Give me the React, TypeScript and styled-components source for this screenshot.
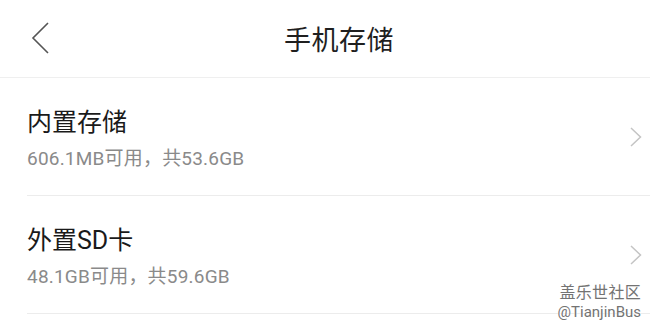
import styled, { createGlobalStyle } from 'styled-components';

const GlobalStyle = createGlobalStyle`
  html, body {
    margin: 0;
    padding: 0;
    background: #fff;
  }

  body {
    font-family: Roboto, "Noto Sans CJK SC", sans-serif;
    -webkit-font-smoothing: antialiased;
  }
`;

const StyledPage = styled.main`
  position: relative;
  width: 650px;
  height: 328px;
  overflow: hidden;
  background: #fff;
`;

const StyledHeader = styled.header`
  height: 77px;
  display: flex;
  align-items: center;
  padding-left: 31px;
  border-bottom: 1px solid #efefef;

  h1 {
    margin: 0 0 0 235px;
    font-size: 27px;
    font-weight: 400;
    color: #1f1f1f;
    letter-spacing: 0.5px;
  }
`;

const StyledBack = styled.svg`
  width: 18px;
  height: 32px;
  margin-top: -1px;
`;

const StyledRow = styled.div`
  padding-left: 27px;
`;

const StyledRowInner = styled.div`
  height: 117px;
  display: flex;
  align-items: center;
  justify-content: space-between;
  padding-right: 8px;
  border-bottom: 1px solid #ececec;
`;

const StyledText = styled.div`
  display: flex;
  flex-direction: column;
  gap: 9px;
  margin-top: 6px;

  h2 {
    margin: 0;
    font-size: 25px;
    line-height: 30px;
    font-weight: 400;
    color: #1a1a1a;
  }

  p {
    margin: 0;
    font-size: 19px;
    line-height: 24px;
    letter-spacing: 0.2px;
    color: #8a8a8a;
  }
`;

const StyledChevron = styled.svg`
  width: 12px;
  height: 20px;
`;

const StyledWatermark = styled.div`
  position: absolute;
  right: 9px;
  bottom: 6px;
  display: flex;
  flex-direction: column;
  align-items: flex-end;
  color: #737373;
  text-shadow: 0 0 2px #fff, 0 0 2px #fff;

  span:first-child {
    font-size: 16px;
    line-height: 20px;
    letter-spacing: 0.3px;
  }

  span:last-child {
    font-size: 15px;
    line-height: 19px;
  }
`;

const items = [
  { title: '内置存储', detail: '606.1MB可用，共53.6GB' },
  { title: '外置SD卡', detail: '48.1GB可用，共59.6GB' },
];

export default function App() {
  return (
    <StyledPage>
      <GlobalStyle />
      <StyledHeader>
        <StyledBack viewBox='0 0 18 32'>
          <path d='M17 1 L2 16 L17 31' fill='none' stroke='#555' strokeWidth='1.6' />
        </StyledBack>
        <h1>手机存储</h1>
      </StyledHeader>
      {items.map((item) => (
        <StyledRow key={item.title}>
          <StyledRowInner>
            <StyledText>
              <h2>{item.title}</h2>
              <p>{item.detail}</p>
            </StyledText>
            <StyledChevron viewBox='0 0 12 20'>
              <path d='M1 1 L10.5 10 L1 19' fill='none' stroke='#c4c4c4' strokeWidth='1.5' />
            </StyledChevron>
          </StyledRowInner>
        </StyledRow>
      ))}
      <StyledWatermark>
        <span>盖乐世社区</span>
        <span>@TianjinBus</span>
      </StyledWatermark>
    </StyledPage>
  );
}
